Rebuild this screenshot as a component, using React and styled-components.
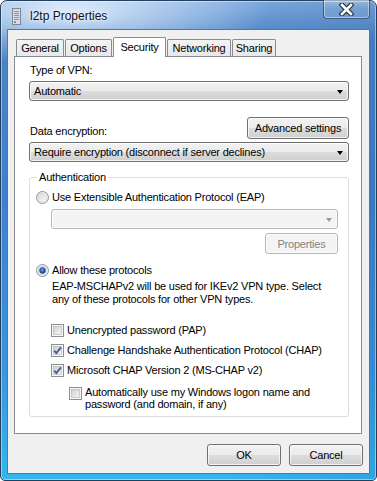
import React from 'react'
import styled, { createGlobalStyle } from 'styled-components'

const GlobalStyle = createGlobalStyle`
  html, body {
    margin: 0;
    padding: 0;
    background: #fff;
  }
  body {
    font-family: "Liberation Sans", Arial, sans-serif;
    font-size: 11px;
    letter-spacing: -0.2px;
    color: #000;
  }
`

const Window = styled.div`
  width: 377px;
  height: 481px;
  box-sizing: border-box;
  display: flex;
  flex-direction: column;
  padding: 0 6px 6px;
  border: 1px solid #223f5e;
  border-radius: 7px 7px 5px 5px;
  box-shadow: inset 0 0 0 1px rgba(255,255,255,.45);
  background:
    radial-gradient(ellipse 200px 55px at 70px 8px, rgba(225,238,252,.95), rgba(225,238,252,0) 100%),
    linear-gradient(90deg, rgba(255,255,255,0) 60%, rgba(30,70,140,.15) 100%),
    linear-gradient(180deg, #7eaadd 0%, #4c84c7 8%, #3e80cd 40%, #3994dd 75%, #35b5ee 100%);
`

const TitleBar = styled.div`
  height: 28px;
  display: flex;
  align-items: flex-start;
  flex-shrink: 0;
`

const TitleIcon = styled.svg`
  margin: 7px 0 0 5px;
  flex-shrink: 0;
`

const TitleText = styled.div`
  margin: 8px 0 0 9px;
  flex: 1;
  font-size: 12px;
  letter-spacing: 0;
  line-height: 15px;
  color: #111;
  text-shadow: 0 0 6px rgba(255,255,255,.9), 0 0 3px rgba(255,255,255,.9);
`

const CloseButton = styled.div`
  width: 47px;
  height: 19px;
  margin-top: -1px;
  box-sizing: border-box;
  display: flex;
  align-items: center;
  justify-content: center;
  border: 1px solid rgba(20,40,70,.6);
  border-top: none;
  border-radius: 0 0 4px 4px;
  box-shadow: inset 0 0 0 1px rgba(255,255,255,.4);
  background: linear-gradient(180deg, rgba(255,255,255,.28), rgba(255,255,255,.08) 50%, rgba(255,255,255,.12));
`

const Client = styled.div`
  flex: 1;
  box-sizing: border-box;
  display: flex;
  flex-direction: column;
  padding: 7px 7px 7px 6px;
  background: #f0f0f0;
  border: 1px solid #56779c;
`

const TabRow = styled.div`
  height: 19px;
  display: flex;
  align-items: flex-end;
  padding-left: 2px;
  position: relative;
  z-index: 1;
`

const Tab = styled.div`
  width: ${p => p.$w}px;
  height: ${p => (p.$active ? 20 : 17)}px;
  margin-bottom: ${p => (p.$active ? -1 : 0)}px;
  margin-right: 1px;
  box-sizing: border-box;
  display: flex;
  align-items: ${p => (p.$active ? 'flex-start' : 'center')};
  justify-content: center;
  padding-top: ${p => (p.$active ? 2 : 0)}px;
  border: 1px solid #898c95;
  border-bottom: none;
  border-radius: 2px 2px 0 0;
  background: ${p => (p.$active ? '#fff' : 'linear-gradient(180deg, #f3f3f3, #e8e8e8)')};
  line-height: 15px;
  white-space: nowrap;
`

const Panel = styled.div`
  height: 378px;
  box-sizing: border-box;
  display: flex;
  flex-direction: column;
  padding: 6px 12px 0 14px;
  background: #fff;
  border: 1px solid #898c95;
`

const Label = styled.div`
  line-height: 15px;
  padding-left: 1px;
  white-space: nowrap;
`

const Combo = styled.div`
  height: 20px;
  margin-top: ${p => p.$mt || 0}px;
  margin-left: ${p => p.$ml || 0}px;
  margin-right: ${p => p.$mr || 0}px;
  box-sizing: border-box;
  display: flex;
  align-items: center;
  justify-content: space-between;
  padding: 0 5px 0 4px;
  border: 1px solid ${p => (p.$disabled ? '#b4b8bc' : '#707070')};
  border-radius: 3px;
  background: ${p => (p.$disabled
    ? '#f4f4f4'
    : 'linear-gradient(180deg, #f2f2f2 0%, #ebebeb 50%, #dddddd 50%, #cfcfcf 100%)')};
  box-shadow: inset 0 0 0 1px rgba(255,255,255,.75);
  white-space: nowrap;
`

const Arrow = styled.span`
  width: 0;
  height: 0;
  border-left: 3.5px solid transparent;
  border-right: 3.5px solid transparent;
  border-top: 4px solid ${p => (p.$disabled ? '#9a9a9a' : '#000')};
  margin-top: 1px;
`

const Button = styled.div`
  width: ${p => p.$w}px;
  height: ${p => p.$h || 22}px;
  margin-top: ${p => p.$mt || 0}px;
  margin-right: ${p => p.$mr || 0}px;
  box-sizing: border-box;
  display: flex;
  align-items: center;
  justify-content: center;
  align-self: flex-end;
  border: 1px solid ${p => (p.$disabled ? '#b4b8bc' : '#707070')};
  border-radius: 3px;
  background: ${p => (p.$disabled
    ? '#f4f4f4'
    : 'linear-gradient(180deg, #f2f2f2 0%, #ebebeb 50%, #dddddd 50%, #cfcfcf 100%)')};
  box-shadow: inset 0 0 0 1px rgba(255,255,255,.75);
  color: ${p => (p.$disabled ? '#838383' : '#000')};
  white-space: nowrap;
`

const SettingsRow = styled.div`
  height: 33px;
  margin-top: 5px;
  display: flex;
  justify-content: space-between;
  align-items: flex-start;

  ${Label} {
    align-self: flex-end;
  }
`

const Group = styled.fieldset`
  margin: 8px 0 0;
  padding: 6px 0 6px;
  border: 1px solid #d5dfe5;
  border-radius: 3px;
  display: flex;
  flex-direction: column;
  min-width: 0;

  legend {
    margin-left: 7px;
    padding: 0 2px;
    line-height: 14px;
  }
`

const OptionRow = styled.div`
  display: flex;
  align-items: flex-start;
  gap: 3px;
  margin-top: ${p => p.$mt || 0}px;
  margin-left: ${p => p.$ml}px;
  line-height: ${p => p.$lh || 15}px;
  white-space: nowrap;

  svg {
    flex-shrink: 0;
    margin-top: 1px;
  }
`

const Note = styled.div`
  margin: 2px 0 0 22px;
  line-height: 13px;
  white-space: nowrap;
`

const Footer = styled.div`
  display: flex;
  justify-content: flex-end;
  gap: 8px;
  margin-top: 10px;
  margin-right: -1px;
`

const Radio = ({ checked }) => (
  <svg width="13" height="13" viewBox="0 0 13 13">
    <defs>
      <linearGradient id="rbg" x1="0" y1="0" x2="1" y2="1">
        <stop offset="0" stopColor="#d8d8d8" />
        <stop offset="1" stopColor="#fafafa" />
      </linearGradient>
      <radialGradient id="rdot" cx="0.45" cy="0.4" r="0.6">
        <stop offset="0" stopColor="#7fb6ea" />
        <stop offset="0.5" stopColor="#2d6bb8" />
        <stop offset="1" stopColor="#163d78" />
      </radialGradient>
    </defs>
    <circle cx="6.5" cy="6.5" r="6" fill="#f4f4f4" stroke="#8a949e" />
    <circle cx="6.5" cy="6.5" r="4.5" fill="url(#rbg)" stroke="#c8cdd2" strokeWidth="0.6" />
    {checked && <circle cx="6.5" cy="6.5" r="3" fill="url(#rdot)" stroke="#1f4a85" strokeWidth="0.5" />}
  </svg>
)

const Check = ({ checked }) => (
  <svg width="13" height="13" viewBox="0 0 13 13">
    <defs>
      <linearGradient id="cbg" x1="0" y1="0" x2="1" y2="1">
        <stop offset="0" stopColor="#cbcfd5" />
        <stop offset="1" stopColor="#f7f7f7" />
      </linearGradient>
    </defs>
    <rect x="0.5" y="0.5" width="12" height="12" fill="#f6f6f6" stroke="#8e8f8f" />
    <rect x="2.5" y="2.5" width="8" height="8" fill="url(#cbg)" stroke="#aeb3b9" strokeWidth="0.6" />
    {checked && (
      <path d="M3.2 6.6 L5.4 9.2 L9.9 3.3" fill="none" stroke="#4a5f8f" strokeWidth="1.9" strokeLinejoin="round" />
    )}
  </svg>
)

const ServerIcon = () => (
  <TitleIcon width="9" height="17" viewBox="0 0 9 17">
    <rect x="0.5" y="0.5" width="8" height="16" fill="#d6dde4" stroke="#7b8794" />
    {[3, 5, 7, 9, 11].map(y => (
      <rect key={y} x="2" y={y} width="5" height="1" fill="#8896a4" />
    ))}
    <rect x="2" y="13.5" width="2" height="1.5" fill="#5a8a5a" />
  </TitleIcon>
)

const CloseGlyph = () => (
  <svg width="15" height="13" viewBox="0 0 15 13">
    <path d="M3 2 L12 11 M12 2 L3 11" stroke="#2a3644" strokeWidth="5" strokeLinecap="square" />
    <path d="M3 2 L12 11 M12 2 L3 11" stroke="#fff" strokeWidth="2.6" strokeLinecap="square" />
  </svg>
)

const tabs = [
  { name: 'General', w: 48 },
  { name: 'Options', w: 47 },
  { name: 'Security', w: 53, active: true },
  { name: 'Networking', w: 64 },
  { name: 'Sharing', w: 44 },
]

export default function App() {
  return (
    <>
      <GlobalStyle />
      <Window>
        <TitleBar>
          <ServerIcon />
          <TitleText>l2tp Properties</TitleText>
          <CloseButton><CloseGlyph /></CloseButton>
        </TitleBar>
        <Client>
          <TabRow>
            {tabs.map(t => (
              <Tab key={t.name} $w={t.w} $active={t.active}>{t.name}</Tab>
            ))}
          </TabRow>
          <Panel>
            <Label>Type of VPN:</Label>
            <Combo $mt={3}>
              <span>Automatic</span>
              <Arrow />
            </Combo>
            <SettingsRow>
              <Label>Data encryption:</Label>
              <Button $w={102}>Advanced settings</Button>
            </SettingsRow>
            <Combo $mt={3}>
              <span>Require encryption (disconnect if server declines)</span>
              <Arrow />
            </Combo>
            <Group>
              <legend>Authentication</legend>
              <OptionRow $ml={6}>
                <Radio />
                <span>Use Extensible Authentication Protocol (EAP)</span>
              </OptionRow>
              <Combo $disabled $mt={4} $ml={21} $mr={10}>
                <span />
                <Arrow $disabled />
              </Combo>
              <Button $disabled $w={73} $h={21} $mt={4} $mr={10}>Properties</Button>
              <OptionRow $ml={6} $mt={9}>
                <Radio checked />
                <span>Allow these protocols</span>
              </OptionRow>
              <Note>
                EAP-MSCHAPv2 will be used for IKEv2 VPN type. Select<br />
                any of these protocols for other VPN types.
              </Note>
              <OptionRow $ml={21} $mt={17}>
                <Check />
                <span>Unencrypted password (PAP)</span>
              </OptionRow>
              <OptionRow $ml={21} $mt={5}>
                <Check checked />
                <span>Challenge Handshake Authentication Protocol (CHAP)</span>
              </OptionRow>
              <OptionRow $ml={21} $mt={5}>
                <Check checked />
                <span>Microsoft CHAP Version 2 (MS-CHAP v2)</span>
              </OptionRow>
              <OptionRow $ml={39} $mt={8} $lh={12}>
                <Check />
                <span>
                  Automatically use my Windows logon name and<br />
                  password (and domain, if any)
                </span>
              </OptionRow>
            </Group>
          </Panel>
          <Footer>
            <Button $w={74}>OK</Button>
            <Button $w={74}>Cancel</Button>
          </Footer>
        </Client>
      </Window>
    </>
  )
}
